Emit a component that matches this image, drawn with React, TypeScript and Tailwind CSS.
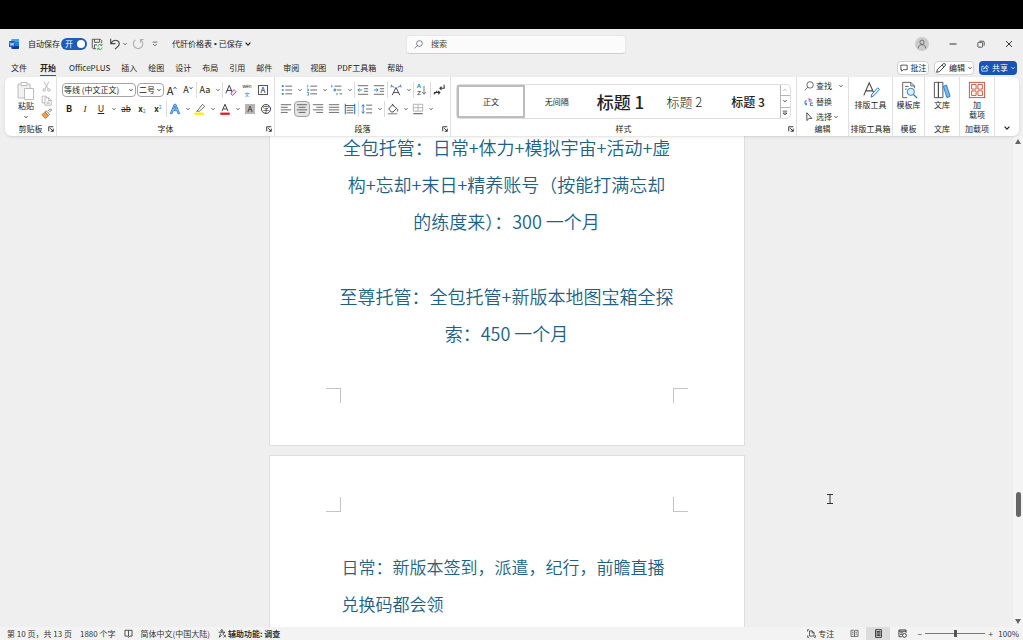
import React, { useState } from 'react';

const tabs = ['文件', '开始', 'OfficePLUS', '插入', '绘图', '设计', '布局', '引用', '邮件', '审阅', '视图', 'PDF工具箱', '帮助'];

type IconProps = { children: React.ReactNode; className?: string; box?: number };

function Icon({ children, className = 'size-3', box = 14 }: IconProps) {
    return (
        <svg viewBox={`0 0 ${box} ${box}`} className={`shrink-0 ${className}`} fill="none" stroke="currentColor" strokeWidth="1" aria-hidden="true">
            {children}
        </svg>
    );
}

function Chevron({ className = 'size-1' }: { className?: string }) {
    return (
        <svg viewBox="0 0 8 8" className={`shrink-0 ${className}`} fill="none" stroke="currentColor" strokeWidth="1.6" aria-hidden="true">
            <path d="M0.8 2.2 4 5.6 7.2 2.2" />
        </svg>
    );
}

function Tool({ label, children, active }: { label: string; children: React.ReactNode; active?: boolean }) {
    return (
        <button
            aria-label={label}
            className={`flex h-4 w-4 shrink-0 items-center justify-center whitespace-nowrap rounded-sm ${active ? 'border border-[#a0a0a0] bg-[#e4e4e4]' : ''}`}
        >
            {children}
        </button>
    );
}

function More({ label }: { label: string }) {
    return (
        <button aria-label={label} className="flex h-4 w-[9px] shrink-0 items-center justify-center text-[#444]">
            <Chevron />
        </button>
    );
}

function Divider() {
    return <span className="h-4 w-px shrink-0 bg-[#dcdcdc]" />;
}

function Group({ title, width, launcher, children }: { title: string; width: string; launcher?: boolean; children: React.ReactNode }) {
    return (
        <section className={`flex flex-col border-r border-[#e0e0e0] pt-1 ${width}`}>
            <div className="h-[42px]">{children}</div>
            <div className="flex h-[12px] items-center">
                {launcher && <span className="w-2" />}
                <h2 className="flex-1 whitespace-nowrap text-center">{title}</h2>
                {launcher && (
                    <button aria-label={`${title}设置`} className="w-2">
                        <Icon className="size-[6px]" box={8}>
                            <path d="M1 7V1h6M3 3l4 4M7 3.5V7H3.5" strokeWidth="1.2" />
                        </Icon>
                    </button>
                )}
            </div>
        </section>
    );
}

function BigTool({ label, children }: { label: React.ReactNode; children: React.ReactNode }) {
    return (
        <button className="flex w-full flex-col items-center whitespace-nowrap">
            {children}
            <span className="mt-px leading-[10px]">{label}</span>
        </button>
    );
}

function TitleBar() {
    const [autoSave, setAutoSave] = useState(true);
    return (
        <header className="flex h-[30px] shrink-0 items-center">
            <div className="flex flex-1 items-center whitespace-nowrap pl-[9px]">
                <svg viewBox="0 0 20 20" className="size-[10px]" aria-hidden="true">
                    <rect x="5" y="0" width="15" height="20" rx="2" fill="#2b7cd3" />
                    <path d="M5 2a2 2 0 0 1 2-2h11a2 2 0 0 1 2 2v4H5z" fill="#41a5ee" />
                    <path d="M5 14h15v4a2 2 0 0 1-2 2H7a2 2 0 0 1-2-2z" fill="#103f91" />
                    <rect x="0" y="4" width="12" height="12" rx="1" fill="#185abd" />
                    <path d="M2 7l2 6 2-5 2 5 2-6" fill="none" stroke="#fff" strokeWidth="1.4" />
                </svg>
                <label className="ml-[9px] flex items-center gap-px">
                    <span>自动保存</span>
                    <input type="checkbox" checked={autoSave} onChange={() => setAutoSave(!autoSave)} className="peer sr-only" />
                    <span className="flex h-3 w-[26px] items-center justify-between rounded-full bg-[#1f5bb8] pl-1 pr-[2px] text-white peer-focus-visible:outline">
                        开
                        <span className="size-2 rounded-full bg-white" />
                    </span>
                </label>
                <button aria-label="保存" className="ml-1 text-[#444]">
                    <Icon>
                        <path d="M6 12.5H2.5l-1-1v-10h9.5l1.5 1.5V6M4 1.5v3.5h6V1.500M4 12.500V8h3" />
                        <path d="M8 10a2.500 2.500 0 0 1 4.500-1.500M13 11a2.500 2.500 0 0 1-4.500 1.500M12.800 6.800v2h-2M8 14v-2h2" stroke="#2f9e44" />
                    </Icon>
                </button>
                <button aria-label="撤消" className="ml-[6px] text-[#444]">
                    <Icon>
                        <path d="M2 1v5.500h5.500M2.200 6.200C4 3.500 7 1.800 9.800 3.200c3 1.600 2.600 4.800.8 6.500L7 13" strokeWidth="1.300" />
                    </Icon>
                </button>
                <span className="ml-[2px] text-[#444]"><Chevron /></span>
                <button aria-label="重做" className="ml-[5px] text-[#aaa]">
                    <Icon>
                        <path d="M4 2.200a5.500 5.500 0 1 0 6.500.2M10 5.500V1.800h3.500" strokeWidth="1.200" />
                    </Icon>
                </button>
                <button aria-label="自定义快速访问工具栏" className="ml-2 text-[#444]">
                    <Icon className="size-[6px]" box={8}>
                        <path d="M1 1.500h6M1.500 4 4 6.500 6.500 4" />
                    </Icon>
                </button>
                <button className="ml-[14px] flex items-center gap-[2px]">
                    代肝价格表
                    <span className="font-['Liberation_Sans',sans-serif]">•</span>
                    已保存
                    <Chevron className="size-[6px]" />
                </button>
            </div>
            <label className="ml-[10px] flex h-[19px] w-[220px] items-center gap-2 rounded-sm border border-b-[#cfcfcf] border-[#e6e6e6] bg-[#fbfbfb] pl-[7px] text-[#444]">
                <Icon className="size-[9px]">
                    <circle cx="8.500" cy="5.500" r="4.500" />
                    <path d="M5.300 8.700 1 13" />
                </Icon>
                <input aria-label="搜索" placeholder="搜索" className="min-w-0 flex-1 bg-transparent outline-none placeholder:text-[#444]" />
            </label>
            <div className="flex flex-1 items-center justify-end gap-5 pr-[10px] text-[#333]">
                <button aria-label="帐户" className="flex size-[14px] items-center justify-center rounded-full bg-[#cbcbcb] text-[#555]">
                    <Icon className="size-[10px]">
                        <circle cx="7" cy="4.500" r="3" />
                        <path d="M2 13c0-3.500 2-5 5-5s5 1.500 5 5" />
                    </Icon>
                </button>
                <button aria-label="最小化" className="w-2">
                    <Icon className="size-2" box={8}><path d="M0.500 4h7" /></Icon>
                </button>
                <button aria-label="还原" className="w-2">
                    <Icon className="size-2" box={10}>
                        <rect x="1" y="3" width="6" height="6" rx="1" />
                        <path d="M3 1.500h4.500a1.500 1.500 0 0 1 1.500 1.500v4" />
                    </Icon>
                </button>
                <button aria-label="关闭" className="w-2">
                    <Icon className="size-2" box={8}><path d="m1 1 6 6M7 1 1 7" /></Icon>
                </button>
            </div>
        </header>
    );
}

function TabBar() {
    return (
        <div className="flex h-[18px] shrink-0 items-center justify-between pl-[11px] pr-[6px]">
            <nav className="flex gap-[11px] whitespace-nowrap">
                {tabs.map((tab) => (
                    <button key={tab} className={`h-[15px] border-b ${tab === '开始' ? 'mx-[2px] border-[#1f5bb8] font-bold' : 'border-transparent'}`}>
                        {tab}
                    </button>
                ))}
            </nav>
            <div className="flex gap-[5px] whitespace-nowrap">
                <button className="flex h-[14px] w-8 items-center justify-center gap-[3px] rounded-sm border border-[#d0d0d0] bg-white">
                    <Icon className="size-2"><path d="M1.500 2h11v8H6l-3 2.500V10H1.500z" strokeWidth="1.300" /></Icon>
                    批注
                </button>
                <button className="flex h-[14px] w-10 items-center justify-center gap-[3px] rounded-sm border border-[#d0d0d0] bg-white">
                    <Icon className="size-[10px]"><path d="m1 13 1-4L10 1.300a1.800 1.800 0 0 1 2.700 2.700L5 12z M8.500 3l2.500 2.500" strokeWidth="1.200" /></Icon>
                    编辑
                    <Chevron />
                </button>
                <button className="flex h-[14px] w-[38px] items-center justify-center gap-[3px] rounded-sm bg-[#1853b5] text-white">
                    <Icon className="size-2"><path d="M5 4H1.500v8.500h9.500V9M4.500 9c.5-3 2-4.500 5-4.500V2l3.500 3.500L9.500 9V6.500c-2.500 0-3.700.7-5 2.500z" strokeWidth="1.200" /></Icon>
                    共享
                    <Chevron />
                </button>
            </div>
        </div>
    );
}

function ClipboardGroup() {
    return (
        <Group title="剪贴板" width="w-[52px]" launcher>
            <div className="flex justify-between pl-3 pr-1">
                <button className="flex flex-col items-center">
                    <svg viewBox="0 0 18 20" className="h-5 w-[18px]" fill="#fff" stroke="#bdbdbd" aria-hidden="true">
                        <path d="M1 3h12v14H1z" fill="#f1f1f1" />
                        <path d="M4 1.500h6v3H4z" />
                        <path d="M7.500 7.500h9v11h-9z" />
                    </svg>
                    <span className="leading-[10px]">粘贴</span>
                    <Chevron className="mt-1 size-1" />
                </button>
                <div className="flex flex-col items-center justify-between text-[#aaa]">
                    <button aria-label="剪切">
                        <Icon className="size-[11px]">
                            <path d="M4 1l5 9M10 1 5 10" />
                            <circle cx="4" cy="11.500" r="1.600" />
                            <circle cx="10" cy="11.500" r="1.600" />
                        </Icon>
                    </button>
                    <button aria-label="复制">
                        <Icon className="size-[11px]">
                            <path d="M5 10H1.500V1.500h5L8 3" />
                            <path d="M5 3.500h5l3 3v6.500H5zM9.500 3.500V7H13M7 9h4M7 11h4" />
                        </Icon>
                    </button>
                    <button aria-label="格式刷">
                        <Icon className="size-[11px]">
                            <path d="m9 4 3-3 1.500 1.500-3 3" stroke="#555" />
                            <path d="M6.500 3.500 11 8l-1.500 1.500L5 5z" stroke="#555" fill="#fff" />
                            <path d="M5 5.500 1 8.500l4.500 5L9.500 10z" fill="#f0a04a" stroke="#c9731c" />
                        </Icon>
                    </button>
                </div>
            </div>
        </Group>
    );
}

function FontGroup() {
    return (
        <Group title="字体" width="w-[218px]" launcher>
            <div className="flex h-[18px] items-center pl-[5px]">
                <label className="flex h-[14px] w-[74px] items-center rounded-sm border border-[#a5a5a5] pl-px pr-[2px]">
                    <select aria-label="字体" className="min-w-0 flex-1 appearance-none bg-transparent outline-none">
                        <option>等线 (中文正文)</option>
                    </select>
                    <Chevron />
                </label>
                <label className="ml-px flex h-[14px] w-[27px] items-center rounded-sm border border-[#a5a5a5] pl-px pr-[2px]">
                    <select aria-label="字号" className="min-w-0 flex-1 appearance-none bg-transparent outline-none">
                        <option>二号</option>
                    </select>
                    <Chevron />
                </label>
                <Tool label="增大字号">
                    <span className="text-[11px]">A</span>
                    <Icon className="mb-1 size-1 text-[#2b7cd3]" box={8}><path d="M1 6l3-4 3 4" strokeWidth="2" /></Icon>
                </Tool>
                <Tool label="减小字号">
                    <span className="text-[9px]">A</span>
                    <Icon className="mb-1 size-1 text-[#2b7cd3]" box={8}><path d="M1 2l3 4 3-4" strokeWidth="2" /></Icon>
                </Tool>
                <Divider />
                <Tool label="更改大小写"><span className="text-[9px]">Aa</span></Tool>
                <More label="大小写选项" />
                <Divider />
                <Tool label="清除格式">
                    <Icon>
                        <path d="M1 11 5 1.500 8.500 10M2.500 7.500h5" />
                        <path d="m7 10.500 3.500-4 2.500 2.500-3.500 4H8.300L7 11.700z" stroke="#a33fb5" fill="#f3def6" />
                    </Icon>
                </Tool>
                <Tool label="拼音指南">
                    <span className="flex flex-col items-center text-[5px] leading-[7px]">
                        <span className="font-['Liberation_Sans',sans-serif]">wén</span>
                        <span className="text-[#2b7cd3]">文</span>
                    </span>
                </Tool>
                <Tool label="字符边框">
                    <span className="flex size-[10px] items-center justify-center border border-[#555] text-[8px]">A</span>
                </Tool>
            </div>
            <div className="flex h-5 items-center pl-1">
                <Tool label="加粗"><b className="text-[9px]">B</b></Tool>
                <Tool label="倾斜"><i className="font-['Liberation_Serif',serif] text-[9px]">I</i></Tool>
                <Tool label="下划线"><span className="text-[9px] underline">U</span></Tool>
                <More label="下划线选项" />
                <Tool label="删除线"><span className="line-through">ab</span></Tool>
                <Tool label="下标"><b>x</b><span className="mt-1 text-[5px] text-[#2b7cd3]">2</span></Tool>
                <Tool label="上标"><b>x</b><span className="mb-1 text-[5px] text-[#2b7cd3]">2</span></Tool>
                <Divider />
                <Tool label="文本效果">
                    <Icon>
                        <path d="M1.500 12.500 6 1.500h2l4.500 11h-2L9.300 9H4.700l-1.200 3.500zM5.500 7h3L7 3.500z" stroke="#1f74c4" fill="#a5d3f5" />
                    </Icon>
                </Tool>
                <More label="文本效果选项" />
                <Tool label="突出显示">
                    <Icon>
                        <path d="M4 9 10 1.500 12.500 4 6.500 9.500H3z" stroke="#555" />
                        <path d="M0.500 12.500h11" stroke="#ffee00" strokeWidth="2.600" />
                    </Icon>
                </Tool>
                <More label="突出显示颜色" />
                <Tool label="字体颜色">
                    <Icon>
                        <path d="M3.500 9.500 7 1.500l3.500 8M5 7h4" />
                        <path d="M1.500 12.500h11" stroke="#e81123" strokeWidth="2.600" />
                    </Icon>
                </Tool>
                <More label="字体颜色选项" />
                <Tool label="字符底纹">
                    <span className="flex size-[10px] items-center justify-center bg-[#b5b5b5]">A</span>
                </Tool>
                <Tool label="带圈字符">
                    <span className="flex size-[10px] items-center justify-center rounded-full border border-[#444] text-[7px]">字</span>
                </Tool>
            </div>
        </Group>
    );
}

function ParagraphGroup() {
    return (
        <Group title="段落" width="w-[176px]" launcher>
            <div className="flex h-[18px] items-center pl-1 text-[#555]">
                <Tool label="项目符号">
                    <Icon>
                        <path d="M5 2.500h8M5 7h8M5 11.500h8" />
                        <path d="M1 2.500h2M1 7h2M1 11.500h2" stroke="#1f74c4" strokeWidth="2" />
                    </Icon>
                </Tool>
                <More label="项目符号库" />
                <Tool label="编号">
                    <Icon>
                        <path d="M5 2.500h8M5 7h8M5 11.500h8" />
                        <path d="M2 1v3M1 6h2v2H1M1 10h2v3H1" stroke="#1f74c4" strokeWidth="0.800" />
                    </Icon>
                </Tool>
                <More label="编号库" />
                <Tool label="多级列表">
                    <Icon>
                        <path d="M4 2.500h8M7 7h5M10 11.500h3" />
                        <path d="M1 1v3M3.500 6h2v2h-2zM7 10.500v2.500" stroke="#1f74c4" />
                    </Icon>
                </Tool>
                <More label="多级列表库" />
                <Divider />
                <Tool label="减少缩进">
                    <Icon>
                        <path d="M1 2h12M8 5.500h5M8 8.500h5M1 12h12" />
                        <path d="M6 7H1M3 5 1 7l2 2" stroke="#1f74c4" />
                    </Icon>
                </Tool>
                <Tool label="增加缩进">
                    <Icon>
                        <path d="M1 2h12M8 5.500h5M8 8.500h5M1 12h12" />
                        <path d="M1 7h5M4 5l2 2-2 2" stroke="#1f74c4" />
                    </Icon>
                </Tool>
                <Divider />
                <Tool label="中文版式">
                    <Icon>
                        <path d="M2.500 13 7 4l4.500 9M4 10h6" stroke="#333" />
                        <path d="M1 1.500 5 4M1 4l1-3M13 1.500 9 4M13 4l-1-3" stroke="#1f74c4" />
                    </Icon>
                </Tool>
                <More label="中文版式选项" />
                <Divider />
                <Tool label="排序">
                    <span className="flex flex-col font-['Liberation_Sans',sans-serif] text-[6px] leading-[7px]">
                        <b className="text-[#1f74c4]">A</b>
                        <b>Z</b>
                    </span>
                    <Icon className="h-3 w-[6px]" box={10}><path d="M5-2v14M2 8.500 5 12l3-3.500" strokeWidth="1.300" /></Icon>
                </Tool>
                <Divider />
                <Tool label="显示编辑标记">
                    <Icon>
                        <path d="M13 1v4H8M10 3 8 5l2 2M1 10h7M1 12l4-4M6 8l2 2-2 2" stroke="#333" strokeWidth="1.200" />
                    </Icon>
                </Tool>
            </div>
            <div className="flex h-5 items-center pl-[3px] text-[#555]">
                <Tool label="左对齐"><Icon><path d="M1 2h12M1 5h8M1 8h12M1 11h8" /></Icon></Tool>
                <Tool label="居中" active><Icon><path d="M1 2h12M3 5h8M1 8h12M3 11h8" /></Icon></Tool>
                <Tool label="右对齐"><Icon><path d="M1 2h12M5 5h8M1 8h12M5 11h8" /></Icon></Tool>
                <Tool label="两端对齐"><Icon><path d="M1 2h12M1 5h12M1 8h12M1 11h12" /></Icon></Tool>
                <Tool label="分散对齐">
                    <Icon>
                        <path d="M3 5.500h8M3 8.500h8M3 11.500h8" />
                        <path d="M1.500 1v12M12.500 1v12M2 3h10" stroke="#1f74c4" strokeWidth="1.200" />
                    </Icon>
                </Tool>
                <Divider />
                <Tool label="行距">
                    <Icon>
                        <path d="M6 2.500h7M6 7h7M6 11.500h7" />
                        <path d="M2.500 2v10M1 4l1.500-2L4 4M1 10l1.500 2L4 10" stroke="#1f74c4" />
                    </Icon>
                </Tool>
                <More label="行距选项" />
                <Divider />
                <Tool label="底纹">
                    <Icon>
                        <path d="m2 7 4.500-5 4.500 4.500-4 4H5zM6 1l2 3M11 6c1.500 1 2 2.500 1 4" stroke="#333" />
                        <path d="M1 12.500h11" stroke="#999" strokeWidth="1.500" />
                    </Icon>
                </Tool>
                <More label="底纹颜色" />
                <Tool label="边框">
                    <Icon>
                        <path d="M1.500 1.500h11v8h-11zM7 1.500v8M1.500 5.500h11" stroke="#aaa" />
                        <path d="M1.500 12.500h11" stroke="#333" />
                    </Icon>
                </Tool>
                <More label="边框选项" />
            </div>
        </Group>
    );
}

function StylesGroup() {
    return (
        <Group title="样式" width="min-w-0 flex-1" launcher>
            <div className="mx-[5px] mt-[3px] flex h-[35px] whitespace-nowrap rounded-sm border border-[#dedede]">
                <button className="flex-1 border-2 border-[#bdbdbd]">正文</button>
                <button className="flex-1">无间隔</button>
                <button className="flex-1 text-[17px] font-medium">标题 1</button>
                <button className="flex-1 text-[13px] font-light">标题 2</button>
                <button className="flex-1 text-[12px] font-medium">标题 3</button>
                <div className="flex w-[10px] flex-col border-l border-[#b5b5b5]">
                    <button aria-label="上一行" className="flex flex-1 items-center justify-center text-[#aaa]">
                        <Chevron className="size-1 rotate-180" />
                    </button>
                    <button aria-label="下一行" className="flex flex-1 items-center justify-center border-y border-[#b5b5b5]">
                        <Chevron />
                    </button>
                    <button aria-label="其他样式" className="flex flex-1 items-center justify-center">
                        <Icon className="size-[6px]" box={8}><path d="M1 1.500h6M1.500 4 4 6.500 6.500 4z" /></Icon>
                    </button>
                </div>
            </div>
        </Group>
    );
}

function EditGroup() {
    return (
        <Group title="编辑" width="w-[52px]">
            <div className="flex flex-col pl-[7px] text-[#333]">
                <button className="flex h-[10px] items-center gap-[2px]">
                    <Icon className="size-[10px]"><circle cx="8.500" cy="5.500" r="4.500" /><path d="M5.300 8.700 1 13" /></Icon>
                    查找
                    <span className="ml-[5px]"><Chevron /></span>
                </button>
                <button className="mt-[6px] flex h-[10px] items-center gap-[2px]">
                    <Icon className="size-[10px]">
                        <path d="M7 1v5h3V3.500H7" stroke="#a33fb5" />
                        <path d="M4 5.500H1.500V10H4M2.500 8.500 4.200 10l-1.700 1.500M12.500 8.500H9V12h3.500" stroke="#1f74c4" strokeWidth="1.300" />
                    </Icon>
                    替换
                </button>
                <button className="mt-[5px] flex h-[10px] items-center gap-[2px]">
                    <Icon className="size-[10px]"><path d="M4 1v11l3-3h4z" strokeWidth="1.200" /></Icon>
                    选择
                    <Chevron />
                </button>
            </div>
        </Group>
    );
}

function Ribbon() {
    return (
        <div className="z-10 ml-[5px] mr-1 flex h-[59px] shrink-0 rounded-md bg-white shadow">
            <ClipboardGroup />
            <FontGroup />
            <ParagraphGroup />
            <StylesGroup />
            <EditGroup />
            <Group title="排版工具箱" width="w-11">
                <BigTool label="排版工具">
                    <Icon className="size-[18px]" box={20}>
                        <path d="M2 16 8 2l5 11M4 11h8" stroke="#444" strokeWidth="1.200" />
                        <path d="m10 18 1-3.500 6.500-7 2 2-6.500 7z" stroke="#1f74c4" fill="#d9ecfb" />
                    </Icon>
                </BigTool>
            </Group>
            <Group title="模板" width="w-8">
                <BigTool label="模板库">
                    <Icon className="size-[18px]" box={20}>
                        <path d="M8 18.500H3V1.500h9l4 4V8M12 1.500v4h4M5.500 6h4M5.500 9h2" stroke="#555" />
                        <circle cx="12" cy="12" r="4" stroke="#1f74c4" fill="#d9ecfb" />
                        <path d="m15 15 4 4" stroke="#1f74c4" strokeWidth="1.400" />
                    </Icon>
                </BigTool>
            </Group>
            <Group title="文库" width="w-[35px]">
                <BigTool label="文库">
                    <Icon className="size-[18px]" box={20}>
                        <path d="M1.500 1.500h4.500v17H1.500zM6 1.500h5v17H6z" stroke="#444" />
                        <path d="m11.500 6 3.500-1.500 4 12.500-3.500 1.500z" stroke="#1f74c4" fill="#7db9ea" />
                    </Icon>
                </BigTool>
            </Group>
            <Group title="加载项" width="w-[35px]">
                <BigTool label={<>加<br />载项</>}>
                    <Icon className="size-[18px]" box={20}>
                        <rect x="1.500" y="1.500" width="17" height="17" stroke="#c8492c" />
                        <path d="M4 4h5v5H4zM11 4h5v5h-5zM4 11h5v5H4zM11 11h5v5h-5z" stroke="#c8492c" />
                    </Icon>
                </BigTool>
            </Group>
            <button aria-label="折叠功能区" className="flex w-6 items-end justify-center pb-[5px] pr-px">
                <Chevron className="size-[6px]" />
            </button>
        </div>
    );
}

function Document() {
    return (
        <main className="flex min-h-0 flex-1 overflow-hidden">
            <div className="relative flex flex-1 flex-col items-center gap-[9px]">
                <article className="-mt-2 w-[476px] shrink-0 border border-[#dedede] bg-white pb-[42px]">
                    <div className="whitespace-nowrap text-center text-lg font-[350] leading-[37px] text-[#215f86]">
                        <p>
                            全包托管：日常+体力+模拟宇宙+活动+虚
                            <br />
                            构+忘却+末日+精养账号（按能打满忘却
                            <br />
                            的练度来）：300 一个月
                        </p>
                        <p className="mt-[38px]">
                            至尊托管：全包托管+新版本地图宝箱全探
                            <br />
                            索：450 一个月
                        </p>
                    </div>
                    <div className="mt-9 flex justify-between px-14">
                        <span className="size-[15px] border-r border-t border-[#c4c4c4]" />
                        <span className="size-[15px] border-l border-t border-[#c4c4c4]" />
                    </div>
                </article>
                <article className="w-[476px] shrink-0 border border-[#dedede] bg-white pb-[42px] pt-[41px]">
                    <div className="flex justify-between px-14">
                        <span className="size-[15px] border-b border-r border-[#c4c4c4]" />
                        <span className="size-[15px] border-b border-l border-[#c4c4c4]" />
                    </div>
                    <p className="mt-9 whitespace-nowrap pl-[72px] text-[17px] font-[350] leading-[37px] text-[#215f86]">
                        日常：新版本签到，派遣，纪行，前瞻直播
                        <br />
                        兑换码都会领
                    </p>
                </article>
                {/* text cursor */}
                <svg viewBox="0 0 6 10" className="absolute left-[827px] top-[358px] h-[10px] w-[6px]" fill="none" stroke="#333" aria-hidden="true">
                    <path d="M0 0.500h6M3 0v10M0 9.500h6" />
                </svg>
            </div>
            <div className="flex w-[10px] flex-col items-center justify-between bg-[#f4f4f4] py-[3px] text-[#666]">
                <svg viewBox="0 0 6 5" className="h-[5px] w-[6px]" fill="currentColor" aria-hidden="true"><path d="M0 5h6L3 0z" /></svg>
                <div className="flex w-[5px] flex-1 flex-col">
                    <span className="grow-[347]" />
                    <span className="h-[25px] rounded-full bg-[#666]" />
                    <span className="grow-[102]" />
                </div>
                <svg viewBox="0 0 6 5" className="h-[5px] w-[6px]" fill="currentColor" aria-hidden="true"><path d="M0 0h6L3 5z" /></svg>
            </div>
        </main>
    );
}

function StatusBar() {
    const [zoom, setZoom] = useState(100);
    return (
        <footer className="flex h-[13px] shrink-0 items-center justify-between whitespace-nowrap bg-[#f3f3f3] pl-[7px] pr-1 text-[#333]">
            <div className="flex items-center gap-2">
                <button>第 10 页，共 13 页</button>
                <button>1880 个字</button>
                <button aria-label="校对">
                    <Icon className="size-[9px]"><path d="M7 2.500v9M1.500 2h11v9H9l-2 2-2-2H1.500z" strokeWidth="1.300" /></Icon>
                </button>
                <button>简体中文(中国大陆)</button>
                <button className="flex items-center gap-px font-bold">
                    <Icon className="size-[9px]">
                        <circle cx="6" cy="2.500" r="1.500" strokeWidth="1.300" />
                        <path d="M1 5h10L8 7v2M4 7l-2 6 4-4M8.500 9l4 4M12.500 9l-4 4" strokeWidth="1.300" />
                    </Icon>
                    辅助功能: 调查
                </button>
            </div>
            <div className="flex h-full items-center">
                <button className="mr-2 flex items-center gap-[2px]">
                    <Icon className="size-[9px]"><path d="M3 1H1v3M1 10v3h2M11 13h2v-3M4 3h4l3 3v5H4zM8 3v3h3" strokeWidth="1.200" /></Icon>
                    专注
                </button>
                <button aria-label="阅读视图" className="flex h-full w-6 items-center justify-center">
                    <Icon className="size-[9px]"><path d="M7 3v9M1.500 2H6l1 1 1-1h4.500v9.500H1.500zM3 5h2.500M3 8h2.500M8.500 5H11M8.500 8H11" /></Icon>
                </button>
                <button aria-label="页面视图" className="flex h-full w-6 items-center justify-center bg-[#dcdcdc]">
                    <Icon className="size-[9px]"><path d="M2.500 1h9v12h-9zM4 4h6M4 6h6M4 8h6M4 10h6" strokeWidth="1.500" /></Icon>
                </button>
                <button aria-label="Web 版式视图" className="flex h-full w-6 items-center justify-center">
                    <Icon className="size-[9px]">
                        <path d="M6 12H1.500V1.500h11V6M1.500 3.500h11M3.500 6H8M3.500 8.500H6" strokeWidth="1.400" />
                        <circle cx="10" cy="10" r="3" strokeWidth="1.400" />
                    </Icon>
                </button>
                <button aria-label="缩小" className="w-[11px]" onClick={() => setZoom(zoom - 10)}>−</button>
                <input
                    type="range"
                    aria-label="显示比例"
                    min={10}
                    max={190}
                    value={zoom}
                    onChange={(e) => setZoom(Number(e.target.value))}
                    className="h-[7px] w-[60px] appearance-none bg-[linear-gradient(#777,#777)] bg-[length:100%_1px] bg-center bg-no-repeat [&::-webkit-slider-thumb]:h-[7px] [&::-webkit-slider-thumb]:w-[3px] [&::-webkit-slider-thumb]:appearance-none [&::-webkit-slider-thumb]:bg-[#555]"
                />
                <button aria-label="放大" className="w-[11px]" onClick={() => setZoom(zoom + 10)}>+</button>
                <span className="ml-[2px]">{zoom}%</span>
            </div>
        </footer>
    );
}

export default function App() {
    return (
        <div className="flex h-screen flex-col overflow-hidden bg-[#efefef] font-['Noto_Sans_CJK_SC',sans-serif] text-[8px] leading-[12px] text-[#222]">
            <div className="h-[29px] shrink-0 bg-black" />
            <TitleBar />
            <TabBar />
            <Ribbon />
            <Document />
            <StatusBar />
        </div>
    );
}
